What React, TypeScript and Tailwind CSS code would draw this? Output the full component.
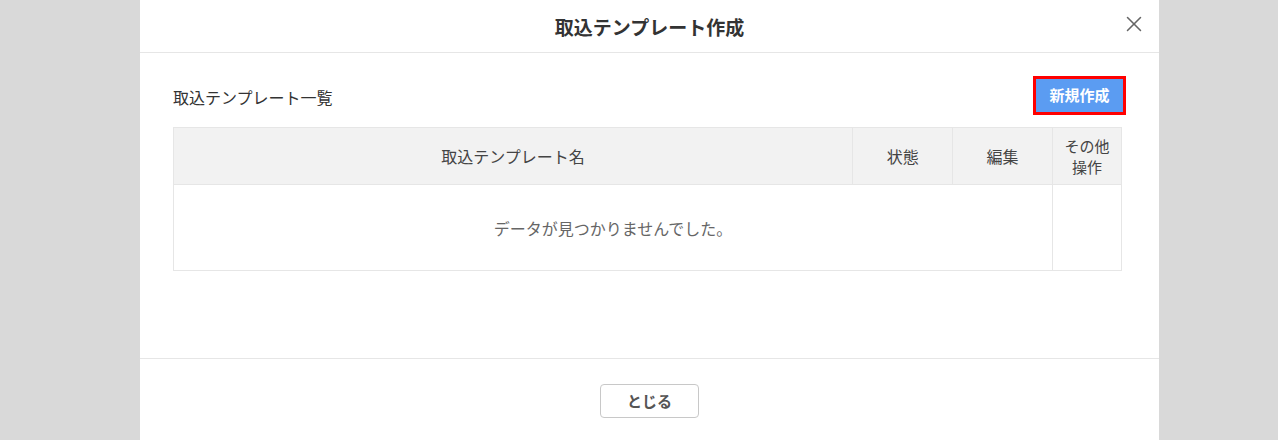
import { X } from 'lucide-react';

const COLUMNS = [
  { label: '取込テンプレート名', width: 'w-[680px]' },
  { label: '状態', width: 'w-[100px]' },
  { label: '編集', width: 'w-[100px]' },
];

export default function App() {
  return (
    <div
      className="w-[1278px] h-[440px] bg-[#d9d9d9] overflow-hidden"
      style={{ fontFamily: '"Noto Sans CJK JP", "Noto Sans", sans-serif' }}
    >
      <div className="ml-[140px] w-[1019px] h-[440px] bg-white flex flex-col">
        {/* Header */}
        <div className="relative h-[53px] flex items-center justify-center border-b border-[#e6e6e6]">
          <h1 className="text-[19px] font-bold text-[#333] leading-none">取込テンプレート作成</h1>
          <button className="absolute right-[12px] top-[11px] text-[#666]">
            <X size={26} strokeWidth={1.4} />
          </button>
        </div>

        {/* Body */}
        <div className="h-[306px] border-b border-[#e6e6e6] pl-[33px] pr-[33px]">
          <div className="flex items-center justify-between pt-[12px] h-[73px]">
            <span className="text-[16px] text-[#333] mt-[2px]">取込テンプレート一覧</span>
            <button className="w-[93px] h-[39px] border-[3px] border-[#ff0000] bg-[#5b9cf2] text-white text-[15px] font-bold flex items-center justify-center">
              新規作成
            </button>
          </div>

          <table className="mt-[1px] w-[949px] border-collapse border border-[#e6e6e6] text-[16px]">
            <thead>
              <tr className="bg-[#f2f2f2] h-[57px] text-[#444]">
                {COLUMNS.map((c) => (
                  <th key={c.label} className={`${c.width} font-normal border border-[#e6e6e6]`}>
                    {c.label}
                  </th>
                ))}
                <th className="w-[69px] font-normal text-[15px] border border-[#e6e6e6] leading-[21px]">
                  その他
                  <br />
                  操作
                </th>
              </tr>
            </thead>
            <tbody>
              <tr className="h-[86px]">
                <td colSpan={3} className="text-center text-[#666] border border-[#e6e6e6]">
                  データが見つかりませんでした。
                </td>
                <td className="border border-[#e6e6e6]" />
              </tr>
            </tbody>
          </table>
        </div>

        {/* Footer */}
        <div className="flex justify-center pt-[25px]">
          <button className="w-[99px] h-[34px] rounded-[4px] border border-[#c8c8c8] bg-white text-[15px] font-bold text-[#555]">
            とじる
          </button>
        </div>
      </div>
    </div>
  );
}
